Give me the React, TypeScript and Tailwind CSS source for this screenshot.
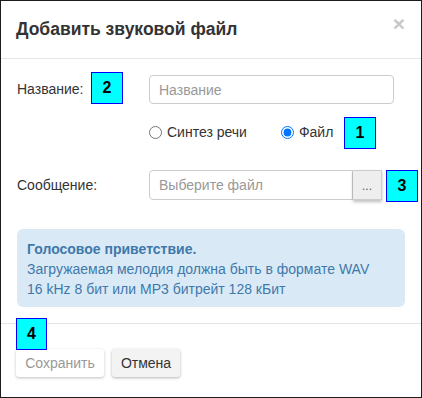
import React from "react";

const font = { fontFamily: '"Liberation Sans", Arial, sans-serif' };

function Marker({ n, className }: { n: string; className: string }) {
  return (
    <div
      className={`absolute flex items-center justify-center border border-[#0000ff] bg-[#00ffff] text-[16px] font-bold text-black ${className}`}
    >
      {n}
    </div>
  );
}

export default function App() {
  return (
    <div
      style={font}
      className="relative flex h-[398px] w-[422px] flex-col border border-[#1c1c1c] bg-white text-[14px] text-[#333]"
    >
      {/* header */}
      <div className="flex h-[58px] shrink-0 items-start justify-between border-b border-[#e5e5e5] pl-[15px] pr-[16px] pt-[18px]">
        <h4 className="text-[17.5px] font-bold leading-[20px] text-[#333]">
          Добавить звуковой файл
        </h4>
        <button className="-mt-[5px] text-[21px] font-bold leading-[20px] text-[#c8c8c8]">
          ×
        </button>
      </div>

      {/* body */}
      <div className="flex flex-col px-[16px] pb-[16px]">
        <div className="mt-[16px] flex h-[29px] items-center">
          <label className="w-[132px] shrink-0">Название:</label>
          <input
            placeholder="Название"
            className="h-[29px] w-[245px] rounded-[4px] border border-[#cccccc] px-[9px] text-[14px] text-[#333] outline-none placeholder:text-[#999]"
          />
        </div>

        <div className="mt-[19px] flex h-[18px] items-center pl-[132px]">
          <label className="flex items-center gap-[5px]">
            <input type="radio" name="src" className="m-0 h-[13px] w-[13px]" />
            <span>Синтез речи</span>
          </label>
          <label className="ml-[34px] flex items-center gap-[5px]">
            <input
              type="radio"
              name="src"
              defaultChecked
              className="m-0 h-[13px] w-[13px]"
            />
            <span>Файл</span>
          </label>
        </div>

        <div className="mt-[29px] flex h-[30px] items-center">
          <label className="w-[132px] shrink-0">Сообщение:</label>
          <div className="flex">
            <input
              placeholder="Выберите файл"
              className="h-[30px] w-[204px] rounded-l-[4px] border border-[#cccccc] px-[9px] text-[14px] text-[#333] outline-none placeholder:text-[#999]"
            />
            <button className="h-[30px] w-[29px] border border-l-0 border-[#cccccc] bg-[#eeeeee] pt-[2px] text-[12px] text-[#555] shadow-[0_2px_3px_rgba(0,0,0,0.25)]">
              ...
            </button>
          </div>
        </div>

        <div className="mt-[29px] rounded-[6px] bg-[#d9eaf6] pb-[8px] pl-[10px] pt-[10px] leading-[20px] text-[#3f78aa]">
          <div className="font-bold">Голосовое приветствие.</div>
          <div>Загружаемая мелодия должна быть в формате WAV</div>
          <div>16 kHz 8 бит или MP3 битрейт 128 кБит</div>
        </div>
      </div>

      {/* footer */}
      <div className="flex gap-[8px] border-t border-[#e5e5e5] pl-[15px] pt-[25px]">
        <button className="h-[28px] w-[88px] rounded-[3px] bg-white text-[14px] text-[#999] shadow-[0_1px_3px_rgba(0,0,0,0.25)]">
          Сохранить
        </button>
        <button className="h-[28px] w-[68px] rounded-[3px] bg-[#f3f3f3] text-[14px] text-[#333] shadow-[0_1px_3px_rgba(0,0,0,0.3)]">
          Отмена
        </button>
      </div>

      <Marker n="2" className="left-[90px] top-[71px] h-[32px] w-[32px]" />
      <Marker n="1" className="left-[343px] top-[116px] h-[32px] w-[32px]" />
      <Marker n="3" className="left-[385px] top-[169px] h-[32px] w-[32px]" />
      <Marker n="4" className="left-[15px] top-[317px] h-[32px] w-[31px]" />
    </div>
  );
}
